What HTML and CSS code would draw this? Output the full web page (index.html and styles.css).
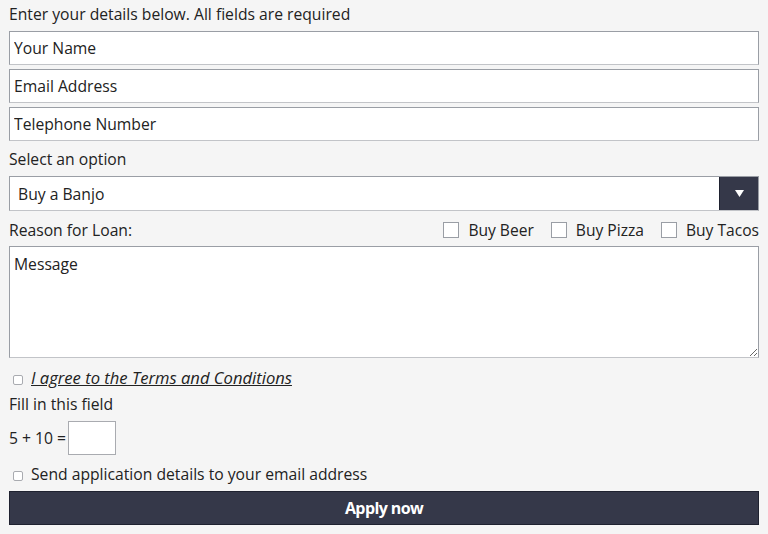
FILE: index.html
```html
<!DOCTYPE html>
<html lang="en">
<head>
<meta charset="utf-8">
<title>Loan application</title>
<link rel="stylesheet" href="styles.css">
</head>
<body>
<form class="form">
  <p class="intro">Enter your details below. All fields are required</p>
  <div class="fields">
    <input class="field" type="text" placeholder="Your Name">
    <input class="field" type="text" placeholder="Email Address">
    <input class="field" type="text" placeholder="Telephone Number">
  </div>
  <label class="label select-label">Select an option</label>
  <div class="select">
    <span class="select-value">Buy a Banjo</span>
    <span class="select-arrow"><svg width="9" height="7" viewBox="0 0 9 7"><path d="M0 0h9L4.5 7z" fill="#fff"/></svg></span>
  </div>
  <div class="reason-row">
    <span class="label">Reason for Loan:</span>
    <div class="reasons">
      <label class="reason"><span class="box"></span>Buy Beer</label>
      <label class="reason"><span class="box"></span>Buy Pizza</label>
      <label class="reason"><span class="box"></span>Buy Tacos</label>
    </div>
  </div>
  <textarea class="message" placeholder="Message"></textarea>
  <label class="check-row agree"><span class="mini"></span><a class="terms">I agree to the Terms and Conditions</a></label>
  <p class="label fill">Fill in this field</p>
  <div class="captcha"><span class="sum">5 + 10 =</span><input class="answer" type="text"></div>
  <label class="check-row send"><span class="mini"></span>Send application details to your email address</label>
  <button class="apply" type="button">Apply now</button>
</form>
</body>
</html>
```

FILE: styles.css
```css
html, body {
  margin: 0;
  padding: 0;
  background: #f5f5f5;
}
body {
  font-family: "Open Sans", "Liberation Sans", sans-serif;
  font-size: 15.7px;
  color: #222;
}
.form {
  display: flex;
  flex-direction: column;
  padding: 4px 9px 0 9px;
}
.intro {
  margin: 0;
  line-height: 20px;
}
.fields {
  display: flex;
  flex-direction: column;
  gap: 4px;
  margin-top: 7px;
}
.field {
  box-sizing: border-box;
  height: 34px;
  width: 100%;
  margin: 0;
  padding: 0 4px;
  border: 1px solid #9a9ea5;
  border-bottom-color: #c2c4c8;
  background: #fff;
  font-family: inherit;
  font-size: 15.7px;
  color: #222;
  outline: none;
}
.field::placeholder, .message::placeholder {
  color: #222;
  opacity: 1;
}
.label {
  line-height: 20px;
  margin: 0;
}
.select-label {
  margin-top: 8px;
}
.select {
  box-sizing: border-box;
  margin-top: 7px;
  height: 35px;
  display: flex;
  align-items: stretch;
  border: 1px solid #9a9ea5;
  border-bottom-color: #c2c4c8;
  background: #fff;
}
.select-value {
  flex: 1;
  display: flex;
  align-items: center;
  padding-left: 8px;
}
.select-arrow {
  width: 38px;
  background: #353849;
  display: flex;
  align-items: center;
  justify-content: center;
  border-left: 1px solid #1f2230;
}
.reason-row {
  margin-top: 9px;
  display: flex;
  justify-content: space-between;
  align-items: center;
  line-height: 20px;
}
.reasons {
  display: flex;
  gap: 17px;
}
.reason {
  display: flex;
  align-items: center;
  gap: 9px;
  font-size: 15.6px;
}
.box {
  box-sizing: border-box;
  width: 16px;
  height: 16px;
  border: 1px solid #9a9ea5;
  background: #fff;
}
.message {
  box-sizing: border-box;
  margin-top: 6px;
  height: 112px;
  width: 100%;
  padding: 6px 4px;
  border: 1px solid #9a9ea5;
  border-bottom-color: #c2c4c8;
  background: #fff;
  font-family: inherit;
  font-size: 15.7px;
  color: #222;
  resize: both;
  outline: none;
}
.check-row {
  display: flex;
  align-items: center;
  line-height: 20px;
  gap: 8px;
  padding-left: 4px;
}
.mini {
  box-sizing: border-box;
  width: 10px;
  height: 10px;
  border: 1px solid #a9abb0;
  border-radius: 2px;
  background: #fff;
  margin-top: 3px;
}
.agree {
  margin-top: 10px;
}
.terms {
  font-style: italic;
  font-size: 16.6px;
  text-decoration: underline;
  color: #222;
}
.fill {
  margin-top: 6px;
}
.captcha {
  margin-top: 7px;
  display: flex;
  align-items: center;
  gap: 2px;
}
.sum {
  font-size: 15.7px;
}
.answer {
  box-sizing: border-box;
  width: 48px;
  height: 34px;
  margin: 0;
  border: 1px solid #a9abb0;
  background: #fff;
  outline: none;
}
.send {
  margin-top: 9px;
  font-size: 15.7px;
}
.apply {
  margin-top: 7px;
  height: 34px;
  width: 100%;
  border: 1px solid #1f2230;
  background: #353849;
  color: #fff;
  font-family: "Open Sans", "Liberation Sans", sans-serif;
  font-weight: 700;
  font-size: 16px;
  letter-spacing: -0.6px;
}
```
